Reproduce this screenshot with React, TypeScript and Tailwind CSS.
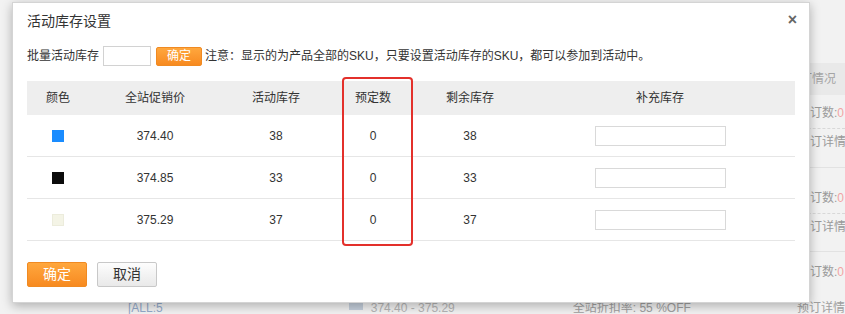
const font = { fontFamily: '"Liberation Sans", "Noto Sans CJK SC", sans-serif' };

const rows = [
  { color: "bg-[#1a8cff]", price: "374.40", stock: "38", booked: "0", left: "38" },
  { color: "bg-[#0b0b0b]", price: "374.85", stock: "33", booked: "0", left: "33" },
  { color: "bg-[#f4f4e6] border border-[#ececdc]", price: "375.29", stock: "37", booked: "0", left: "37" },
];

const SideBlock = ({ h }: { h: string }) => (
  <div className={`flex flex-col border-b border-[#e2e2e2] ${h}`}>
    <div className="h-[28px] flex items-end pb-[1px] whitespace-nowrap">
      <span className="text-[#9a9a9a]">预订数:</span>
      <span className="text-[#f3a3a3]">0</span>
    </div>
    <div className="border-b border-dashed border-[#d8d8d8] mt-[5px]" />
    <div className="h-[26px] flex items-center text-[#9a9a9a] whitespace-nowrap">预订详情</div>
  </div>
);

const BackgroundPage = () => (
  <div className="w-full h-full flex flex-col bg-[#f2f2f2] text-[12px]">
    <div className="flex-1 flex justify-end">
      <div className="w-[47px] flex flex-col">
        <div className="h-[63px]" />
        <div className="h-[32px] bg-[#e9e9e9] flex items-center text-[#a5a5a5] whitespace-nowrap">
          <span className="ml-[-10px]">预订情况</span>
        </div>
        <SideBlock h="h-[73px]" />
        <div className="h-[12px]" />
        <SideBlock h="h-[72px]" />
        <div className="h-[10px]" />
        <div className="flex items-center h-[20px] whitespace-nowrap">
          <span className="text-[#9a9a9a]">预订数:</span>
          <span className="text-[#f3a3a3]">0</span>
        </div>
      </div>
    </div>
    <div className="h-[12px] flex items-start text-[12px] leading-[12px] whitespace-nowrap">
      <span className="ml-[128px] text-[#93aacb]">[ALL:5</span>
      <span className="ml-[186px] w-[14px] h-[8px] bg-[#c5cfdc]" />
      <span className="ml-[8px] text-[#b5b5b5]">374.40 - 375.29</span>
      <span className="ml-[118px] text-[#a0a0a0]">全站折扣率: 55 %OFF</span>
      <span className="ml-auto w-[48px] text-[#a0a0a0]">预订详情</span>
    </div>
  </div>
);

export default function App() {
  return (
    <div className="relative w-[845px] h-[314px] overflow-hidden" style={font}>
      <BackgroundPage />

      <div className="absolute left-[12px] top-[2px] w-[798px] h-[301px] bg-white border border-[#d4d4d4] shadow-[0_3px_10px_rgba(0,0,0,0.28)] px-[14px] text-[#333] text-[12px]">
        <div className="h-[39px] pt-[8px] flex items-start justify-between">
          <h2 className="text-[14px] leading-[20px] text-[#333]">活动库存设置</h2>
          <button className="mt-[-1px] mr-[-2px] text-[#666] text-[16px] font-bold leading-[20px]">×</button>
        </div>

        <div className="mt-[4px] h-[20px] flex items-center">
          <span>批量活动库存</span>
          <input className="ml-[4px] w-[48px] h-[20px] border border-[#d2d2d2] bg-white" />
          <button className="ml-[5px] w-[46px] h-[19px] rounded-[2px] border border-[#f08a22] bg-gradient-to-b from-[#ffa73d] to-[#f78a1f] text-white text-[12px] leading-[17px]">
            确定
          </button>
          <span className="ml-[3px]">注意：显示的为产品全部的SKU，只要设置活动库存的SKU，都可以参加到活动中。</span>
        </div>

        <div className="mt-[15px] w-[768px]">
          <div className="grid grid-cols-[62px_132px_110px_84px_110px_270px] h-[34px] items-center bg-[#eeeeee] text-center">
            <span>颜色</span>
            <span>全站促销价</span>
            <span>活动库存</span>
            <span>预定数</span>
            <span>剩余库存</span>
            <span>补充库存</span>
          </div>
          {rows.map((r, i) => (
            <div
              key={i}
              className="grid grid-cols-[62px_132px_110px_84px_110px_270px] h-[42px] items-center text-center border-b border-[#e6e6e6]"
            >
              <span className="flex justify-center">
                <span className={`w-[12px] h-[12px] ${r.color}`} />
              </span>
              <span>{r.price}</span>
              <span>{r.stock}</span>
              <span>{r.booked}</span>
              <span>{r.left}</span>
              <span className="flex justify-center">
                <input className="w-[131px] h-[20px] border border-[#d9d9d9] bg-white" />
              </span>
            </div>
          ))}
        </div>

        <div className="mt-[21px] flex gap-[10px]">
          <button className="w-[60px] h-[25px] rounded-[2px] border border-[#f08a22] bg-gradient-to-b from-[#ffa73d] to-[#f78a1f] text-white text-[14px]">
            确定
          </button>
          <button className="w-[60px] h-[25px] rounded-[2px] border border-[#c8c8c8] bg-gradient-to-b from-[#fdfdfd] to-[#e9e9e9] text-[#333] text-[14px]">
            取消
          </button>
        </div>

        <div className="absolute left-[329px] top-[74px] w-[71px] h-[169px] rounded-[4px] border-2 border-[#e3302b] pointer-events-none" />
      </div>
    </div>
  );
}
